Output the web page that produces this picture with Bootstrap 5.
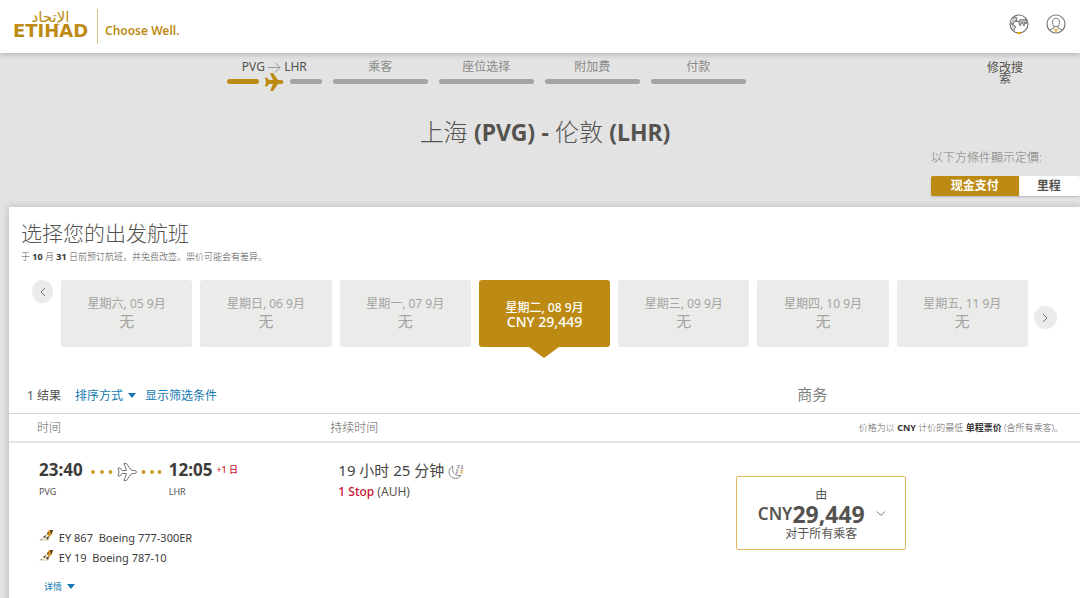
<!DOCTYPE html>
<html lang="zh-CN">
<head>
<meta charset="utf-8">
<meta name="viewport" content="width=device-width, initial-scale=1">
<title>Etihad - 选择航班</title>
<link href="https://cdn.jsdelivr.net/npm/bootstrap@5.3.0/dist/css/bootstrap.min.css" rel="stylesheet">
<style>
:root { --gold: #bd8b13; --ink: #54534f; --link: #1478b0; --red: #c8102e; }
body { background: #e3e3e3; color: var(--ink); font-family: "Noto Sans", "Noto Sans CJK SC", sans-serif; font-size: 12px; line-height: 20px; overflow-x: hidden; }
a, .btn-link { color: var(--link); text-decoration: none; }
.btn { --bs-btn-font-size: 12px; --bs-btn-line-height: 20px; }
.site-header { height: 53px; padding: 0 14px 0 11px; box-shadow: 0 1px 6px rgba(0,0,0,.25); }
.site-header nav { gap: 17px; padding-bottom: 6px; }
.brand { color: var(--gold); }
.brand-marks { text-align: center; width: 87px; padding: 0 7px 5px 0; border-right: 1px solid #dcc48a; height: 35px; }
.brand-ar { font: 400 15px/14px "DejaVu Sans", sans-serif; }
.brand-en { font: 700 18px/14px "DejaVu Sans", sans-serif; }
.brand-tag { font-size: 12px; font-weight: 600; padding: 12px 0 0 7px; }
.step-bar { padding: 4px 53px 0 21%; }
.steps { gap: 11px; }
.step { width: 95px; color: #8a8a88; text-align: center; }
.step-line { height: 5px; border-radius: 3px; background: #a4a4a4; margin-top: 2px; }
.step.active { color: var(--ink); }
.step-flight { height: 9px; }
.step-flight .step-line { width: 32px; margin: 0; }
.step-flight .done { background: var(--gold); }
.modify { width: 44px; font-size: 12px; line-height: 11px; color: var(--ink); padding-top: 5px; }
.route { font-size: 24px; line-height: 32px; font-weight: 300; padding: 30px 0 0 10px; }
.route b { font-size: 23px; font-weight: 700; }
.pay { width: 149px; }
.pay-label { color: #7d7d7a; font-weight: 300; line-height: 20px; }
.pay .btn { --bs-btn-padding-y: 0; --bs-btn-padding-x: 0; --bs-btn-border-width: 0; --bs-btn-border-radius: 2px; --bs-btn-font-weight: 700; --bs-btn-bg: #fff; --bs-btn-color: var(--ink); --bs-btn-active-bg: var(--gold); --bs-btn-active-color: #fff; box-shadow: 0 1px 2px rgba(0,0,0,.2); }
.pay .pay-cash { flex: 7 1 0; }
.pay .pay-miles { flex: 5 1 0; }
.panel { margin: 11px 0 0 9px; background: #fff; box-shadow: 0 0 8px rgba(0,0,0,.2); padding-top: 12px; min-height: 400px; }
.panel h2 { font-size: 21px; line-height: 28px; font-weight: 300; margin: 0 12px; }
.note { font-size: 9px; line-height: 20px; font-weight: 300; margin: 0 12px; }
.note b { color: #333; font-weight: 700; }
.dates { padding: 13px 23px 0; gap: 8px; }
.arrow { width: 21px; height: 23px; border-radius: 50%; background: #ebebea; border: 0; padding: 0; display: flex; align-items: center; justify-content: center; }
.arrow.next { margin-top: 26px; width: 23px; margin-left: -2px; }
.day { flex: 1 1 0; height: 67px; border: 0; border-radius: 3px; background: #ebebea; color: #a4a4a2; padding: 0 0 3px; line-height: 17px; position: relative; }
.day strong { display: block; font-size: 15px; font-weight: 400; line-height: 18px; }
.day.selected { background: var(--gold); color: #fff; font-weight: 500; padding: 3px 0 0; line-height: 14px; }
.day.selected strong { font-size: 14px; line-height: 14px; font-weight: 500; }
.day.selected::after { content: ""; position: absolute; top: 100%; left: 50%; margin-left: -15px; border: 15px solid transparent; border-top: 11px solid var(--gold); border-bottom: 0; }
.tools { padding: 39px 0 7px; }
.tools-left { width: 73.6%; padding-left: 18px; }
.tools .btn-link { margin-left: 14px; }
.tools .btn-link + .btn-link { margin-left: 9px; }
.cabin { font-size: 15px; line-height: 16px; color: #80807d; }
.caret { display: inline-block; border: 4px solid transparent; border-top: 5px solid currentColor; border-bottom: 0; vertical-align: 2px; margin-left: 5px; }
.flights { --bs-table-bg: transparent; --bs-table-color: var(--ink); table-layout: fixed; margin: 0; }
.flights th { border-top: 1px solid #d4d7d6; border-bottom: 2px solid #e6e6e6; padding: 4px 0 3px; font-weight: 300; color: #62625f; }
.flights td { border: 0; padding: 15px 8px 0; }
.flights .c-time { width: 30%; padding-left: 28px; }
.flights .c-dur { width: 38%; }
.flights td.c-time { padding-left: 30px; }
.flights .c-price { text-align: right; font-size: 9px; padding-right: 17px; }
.flights .c-price b { color: #333; font-weight: 700; }
.clock { font-size: 17px; line-height: 24px; font-weight: 700; color: #3c3c3a; }
.airport { font-size: 9px; line-height: 20px; }
.trip { gap: 6px; }
.trip .leg { width: 74px; }
.plus { color: var(--red); font-size: 9px; line-height: 24px; font-weight: 500; margin-left: -2px; }
.dur { font-size: 15px; line-height: 24px; color: #454543; }
.stop { color: var(--red); font-weight: 500; }
.craft { margin-top: 26px; color: #3c3c3a; font-size: 11px; }
.craft svg { margin-right: 3px; vertical-align: -1px; }
.details { --bs-btn-font-size: 9px; padding: 0; margin: 9px 0 0 5px; }
.details .caret { vertical-align: 1px; }
.fare { width: 170px; border: 1px solid #dfb95f; border-radius: 2px; background: #fff; color: var(--ink); padding: 9px 0 7px; line-height: 17px; margin: 18px 0 0 -1px; text-align: center; position: relative; }
.fare .amount { font-size: 23px; line-height: 22px; font-weight: 700; padding-right: 20px; }
.fare .amount span { font-size: 17px; font-weight: 600; vertical-align: 3px; line-height: 17px; }
.fare svg { position: absolute; right: 19px; top: 34px; }
</style>
</head>
<body>
<header class="site-header bg-white d-flex align-items-center position-relative">
  <a href="#" class="brand d-flex">
    <span class="brand-marks d-flex flex-column justify-content-center"><span class="brand-ar" lang="ar">الإتحاد</span><span class="brand-en">ETIHAD</span></span>
    <span class="brand-tag">Choose Well.</span>
  </a>
  <nav class="ms-auto d-flex">
    <a href="#" aria-label="语言"><svg width="20" height="20" viewBox="0 0 20 20" fill="none" stroke="#777" stroke-width="1"><circle cx="10" cy="10" r="9" stroke-width="1.200"/><path d="M3 5l2-2 3 1-1 3-2 1-1 2-2-1M2 10l3 1 2 2-2 2v2" fill="#ccc"/><path d="M7 8V7l3 .5 1-2 3 .5 3-1 1 3-1 2-1-2-1 4-2-4-2 4-1-4-2-1z" fill="#bbb"/><path d="M8.500 19h3.500" stroke="#e0a000" stroke-width="2"/></svg></a>
    <a href="#" aria-label="账户"><svg width="20" height="20" viewBox="0 0 20 20" fill="none" stroke="#777" stroke-width="1"><circle cx="10" cy="10" r="9" stroke-width="1.200"/><ellipse cx="10" cy="8.500" rx="3.500" ry="4.200"/><path d="M8 12v2l-4.500 2M12 12v2l4.500 2"/><path d="M8.500 15.500l1.500 2 1.500-2z" fill="#e9b12e" stroke="#e9b12e"/></svg></a>
  </nav>
</header>

<div class="step-bar d-flex justify-content-between align-items-start">
  <ol class="steps list-unstyled d-flex m-0">
    <li class="step active">PVG <svg width="13" height="11" viewBox="0 0 13 11" fill="none" stroke="#999"><path d="M0 5.500h12M7 .5l5 5-5 5"/></svg> LHR
      <div class="step-flight d-flex align-items-center justify-content-between">
        <div class="step-line done"></div>
        <svg width="20" height="20" viewBox="0 0 20 20" fill="#bd8b13"><path d="M1 5.500h2L5 8h4L6 1h3l5 7h3.500q2 .5 2 2t-2 2H14l-5 7H6l3-7H5l-2 2.500H1L2 10z"/></svg>
        <div class="step-line"></div>
      </div></li>
    <li class="step">乘客<div class="step-line"></div></li>
    <li class="step">座位选择<div class="step-line"></div></li>
    <li class="step">附加费<div class="step-line"></div></li>
    <li class="step">付款<div class="step-line"></div></li>
  </ol>
  <a href="#" class="modify text-center">修改搜索</a>
</div>

<h1 class="route text-center m-0">上海 <b>(PVG)</b> <b>-</b> 伦敦 <b>(LHR)</b></h1>
<div class="pay ms-auto">
  <div class="pay-label" lang="zh-TW">以下方條件顯示定價:</div>
  <div class="btn-group w-100 mt-2" role="group" aria-label="付款方式">
    <input type="radio" class="btn-check" name="pay" id="cash" checked><label class="btn pay-cash" for="cash">现金支付</label>
    <input type="radio" class="btn-check" name="pay" id="miles"><label class="btn pay-miles" for="miles">里程</label>
  </div>
</div>

<main class="panel">
  <h2>选择您的出发航班</h2>
  <p class="note">于 <b>10</b> 月 <b>31</b> 日前预订航班，并免费改签。票价可能会有差异。</p>
  <div class="dates d-flex">
    <button class="arrow" aria-label="前一天"><svg width="6" height="10" viewBox="0 0 6 10" fill="none" stroke="#777"><path d="M5 1L1 5l4 4"/></svg></button>
    <button class="day">星期六, 05 9月<strong>无</strong></button>
    <button class="day">星期日, 06 9月<strong>无</strong></button>
    <button class="day">星期一, 07 9月<strong>无</strong></button>
    <button class="day selected">星期二, 08 9月<strong>CNY 29,449</strong></button>
    <button class="day">星期三, 09 9月<strong>无</strong></button>
    <button class="day">星期四, 10 9月<strong>无</strong></button>
    <button class="day">星期五, 11 9月<strong>无</strong></button>
    <button class="arrow next" aria-label="后一天"><svg width="6" height="10" viewBox="0 0 6 10" fill="none" stroke="#777"><path d="M1 1l4 4-4 4"/></svg></button>
  </div>
  <div class="tools d-flex">
    <div class="tools-left d-flex">
      <span>1 结果</span>
      <button class="btn btn-link p-0 border-0">排序方式<span class="caret"></span></button>
      <button class="btn btn-link p-0 border-0">显示筛选条件</button>
    </div>
    <div class="cabin">商务</div>
  </div>
  <table class="table flights">
    <thead><tr><th class="c-time">时间</th><th class="c-dur">持续时间</th><th class="c-price">价格为以 <b>CNY</b> 计价的最低 <b>单程票价</b> (含所有乘客)。</th></tr></thead>
    <tbody><tr>
      <td class="c-time">
        <div class="trip d-flex">
          <div><div class="clock">23:40</div><div class="airport">PVG</div></div>
          <svg class="leg" width="74" height="28" viewBox="0 0 73 28"><g fill="#c99a25"><circle cx="3.500" cy="14" r="1.900"/><circle cx="12.500" cy="14" r="1.900"/><circle cx="21" cy="14" r="1.900"/><circle cx="54" cy="14" r="1.900"/><circle cx="62.500" cy="14" r="1.900"/><circle cx="70" cy="14" r="1.900"/></g><path d="M28.500 10h2l2 2.500H37l-2.500-7H37l5 7h3.500q1.500.5 1.500 1.500t-1.500 1.500H42l-5 7h-2.500l2.500-7h-4.500l-2 2.500h-2l1-4z" fill="none" stroke="#777"/></svg>
          <div><div class="clock">12:05</div><div class="airport">LHR</div></div>
          <div class="plus">+1 日</div>
        </div>
        <div class="craft">
          <div><svg width="14" height="14" viewBox="0 0 14 14"><path d="M0 12l8-8 2-3h4l-2 6-3 5z" fill="#ece4d4"/><path d="M8 4l2-3h4l-1 4-3 3z" fill="#e09a20"/><path d="M11 1h3l-2 5zM4 8l3-2-1 3zM7 9l3-2-1 4zM1 11l2-1v1zM8 4l2-1-1 3z" fill="#4a3c28"/></svg> EY 867&nbsp; Boeing 777-300ER</div>
          <div><svg width="14" height="14" viewBox="0 0 14 14"><path d="M0 12l8-8 2-3h4l-2 6-3 5z" fill="#ece4d4"/><path d="M8 4l2-3h4l-1 4-3 3z" fill="#e09a20"/><path d="M11 1h3l-2 5zM4 8l3-2-1 3zM7 9l3-2-1 4zM1 11l2-1v1zM8 4l2-1-1 3z" fill="#4a3c28"/></svg> EY 19&nbsp; Boeing 787-10</div>
        </div>
        <button class="btn btn-link details border-0">详情<span class="caret"></span></button>
      </td>
      <td>
        <div class="dur">19 小时 25 分钟 <svg width="16" height="16" viewBox="0 0 16 16" fill="none" stroke="#888"><path d="M5 2C1 4 0 8 2 11.500c3 4 8 4 11 0-5 1-10-3-8-9.500z"/><path d="M8 6h2L8 9h2M9.500 1.500h2l-2 2.500h2" stroke-width=".9"/><path d="M13 2h2l-2 2.500h2" stroke-width=".9"/><path d="M12.500 6.500h2l-2 2.500h2" stroke="#e0a030"/></svg></div>
        <div><a href="#" class="stop">1 Stop</a>&nbsp;(AUH)</div>
      </td>
      <td class="ps-0">
        <button class="fare d-block"><span class="d-block">由</span><span class="amount d-block"><span>CNY</span>29,449</span><span class="d-block">对于所有乘客</span><svg width="10" height="6" viewBox="0 0 10 6" fill="none" stroke="#777"><path d="M1 .5l4 4 4-4"/></svg></button>
      </td>
    </tr></tbody>
  </table>
</main>
<script src="https://cdn.jsdelivr.net/npm/bootstrap@5.3.0/dist/js/bootstrap.bundle.min.js"></script>
</body>
</html>
